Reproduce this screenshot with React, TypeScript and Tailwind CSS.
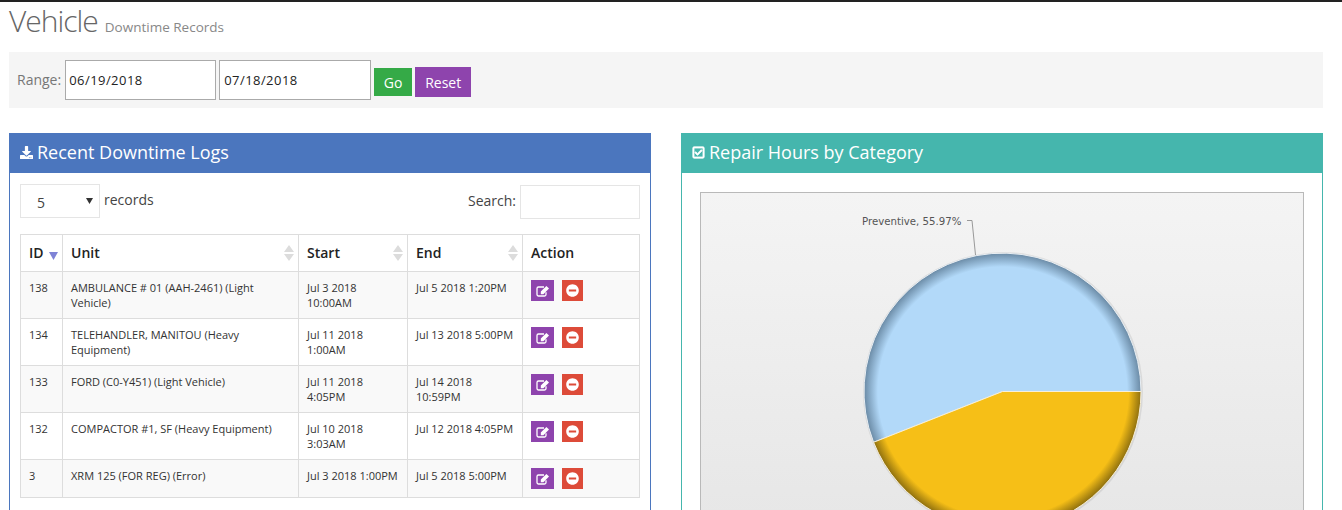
import { FaDownload, FaRegCheckSquare, FaMinusCircle } from "react-icons/fa";

const rows = [
  { id: "138", unit: "AMBULANCE # 01 (AAH-2461) (Light Vehicle)", start: "Jul 3 2018 10:00AM", end: "Jul 5 2018 1:20PM" },
  { id: "134", unit: "TELEHANDLER, MANITOU (Heavy Equipment)", start: "Jul 11 2018 1:00AM", end: "Jul 13 2018 5:00PM" },
  { id: "133", unit: "FORD (C0-Y451) (Light Vehicle)", start: "Jul 11 2018 4:05PM", end: "Jul 14 2018 10:59PM" },
  { id: "132", unit: "COMPACTOR #1, SF (Heavy Equipment)", start: "Jul 10 2018 3:03AM", end: "Jul 12 2018 4:05PM" },
  { id: "3", unit: "XRM 125 (FOR REG) (Error)", start: "Jul 3 2018 1:00PM", end: "Jul 5 2018 5:00PM" },
];

function SortIcon() {
  return (
    <svg width="10" height="16" viewBox="0 0 10 16" className="shrink-0 mt-[2px]">
      <path d="M5 0 L10 7 H0 Z M0 9 H10 L5 16 Z" fill="#dcdcdc" />
    </svg>
  );
}

function EditIcon() {
  return (
    <svg width="14" height="12" viewBox="0 0 14 12">
      <path d="M10 7.2v2.3a1.5 1.5 0 0 1-1.5 1.5h-6A1.5 1.5 0 0 1 1 9.5v-6A1.5 1.5 0 0 1 2.5 2H8" fill="none" stroke="#fff" strokeWidth="1.3" />
      <path d="M4.8 6.6 L10.4 1 L13 3.6 L7.4 9.2 H4.8 Z" fill="#fff" />
    </svg>
  );
}

function Th({ label, width, sort = true }: { label: string; width: string; sort?: boolean }) {
  return (
    <th className={`${width} border border-[#ddd] pl-[8px] pr-[4px] h-[37px] text-left align-middle text-[14px] font-semibold text-[#222]`}>
      <div className="flex items-center justify-between pb-[2px]">
        <span>{label}</span>
        {sort && <SortIcon />}
      </div>
    </th>
  );
}

export default function App() {
  return (
    <div className="h-[510px] overflow-hidden bg-white font-['Open_Sans',sans-serif] border-t-2 border-[#222] pl-[9px] pr-[19px]">
      <div className="flex items-baseline h-[50px] -mt-[1px]">
        <span className="text-[30px] tracking-[-1px] font-light leading-[40px] text-[#666]">Vehicle</span>
        <span className="ml-[7px] text-[13.5px] text-[#888]">Downtime Records</span>
      </div>

      <div className="flex items-center h-[56px] mt-[1px] bg-[#f5f5f5] pl-[8px]">
        <span className="-mt-[2px] text-[14px] text-[#777]">Range:</span>
        <input readOnly value="06/19/2018" className="ml-[4px] w-[151px] h-[40px] border border-[#aaa] bg-white px-[3px] text-[13px] tracking-[0.45px] text-[#222] outline-none" />
        <input readOnly value="07/18/2018" className="ml-[3px] w-[152px] h-[40px] border border-[#aaa] bg-white px-[4px] text-[13px] tracking-[0.45px] text-[#222] outline-none" />
        <button className="ml-[3px] mt-[4px] w-[38px] h-[28px] bg-[#35aa47] text-[14px] text-white">Go</button>
        <button className="ml-[3px] mt-[4px] w-[56px] h-[30px] bg-[#8e44ad] text-[14px] text-white">Reset</button>
      </div>

      <div className="grid grid-cols-2 gap-[30px] mt-[25px]">
        <section className="border border-[#4b76be] border-t-0 h-[500px]">
          <h2 className="flex items-center gap-[4px] -mx-[1px] h-[40px] bg-[#4b76be] pl-[11px] pb-[2px] text-[18px] text-white">
            <FaDownload className="text-[13px]" />
            Recent Downtime Logs
          </h2>
          <div className="px-[10px] pt-[12px]">
            <div className="flex items-center justify-between h-[34px]">
              <div className="flex items-center">
                <div className="flex items-center justify-between w-[80px] h-[34px] -mt-[2px] border border-[#e5e5e5] pl-[16px] pr-[6px] text-[14px] text-[#444]">
                  <span className="mt-[2px]">5</span>
                  <svg width="7" height="6" viewBox="0 0 7 6" className="-mt-[1px]">
                    <path d="M0 0 H7 L3.5 6 Z" fill="#333" />
                  </svg>
                </div>
                <span className="ml-[4px] -mt-[6px] text-[14px] text-[#444]">records</span>
              </div>
              <div className="flex items-center">
                <span className="-mt-[4px] -ml-[1px] text-[14px] text-[#444]">Search:</span>
                <input readOnly className="ml-[4px] w-[120px] h-[34px] border border-[#e5e5e5] bg-white outline-none" />
              </div>
            </div>
            <table className="mt-[15px] w-[619px] table-fixed border-collapse border border-[#ddd]">
              <thead>
                <tr>
                  <th className="w-[42px] border border-[#ddd] pl-[8px] pr-[4px] h-[37px] text-left align-middle text-[14px] font-semibold text-[#222]">
                    <div className="flex items-center justify-between pb-[2px]">
                      <span>ID</span>
                      <svg width="9" height="8" viewBox="0 0 9 8" className="mt-[7px] shrink-0">
                        <path d="M0 0 H9 L4.5 8 Z" fill="#7f83d6" />
                      </svg>
                    </div>
                  </th>
                  <Th label="Unit" width="w-[236px]" />
                  <Th label="Start" width="w-[109px]" />
                  <Th label="End" width="w-[115px]" />
                  <Th label="Action" width="w-[117px]" sort={false} />
                </tr>
              </thead>
              <tbody className="text-[11px] leading-[15px] text-[#333]">
                {rows.map((r, i) => (
                  <tr key={r.id} className={`${i === 4 ? "h-[38px]" : "h-[47px]"} ${i % 2 === 0 ? "bg-[#f9f9f9]" : "bg-white"}`}>
                    <td className="border border-[#ddd] px-[8px] pt-[8px] pb-[8px] align-top">{r.id}</td>
                    <td className="border border-[#ddd] px-[8px] pt-[8px] pb-[8px] align-top">{r.unit}</td>
                    <td className="border border-[#ddd] px-[8px] pt-[8px] pb-[8px] align-top">{r.start}</td>
                    <td className="border border-[#ddd] px-[8px] pt-[8px] pb-[8px] align-top">{r.end}</td>
                    <td className="border border-[#ddd] px-[8px] pt-[8px] pb-[8px] align-top">
                      <div className="flex gap-[8px]">
                        <span className="flex items-center justify-center w-[23px] h-[21px] bg-[#8e44ad]">
                          <EditIcon />
                        </span>
                        <span className="flex items-center justify-center w-[21px] h-[21px] bg-[#dd4b39] text-white text-[13px]">
                          <FaMinusCircle />
                        </span>
                      </div>
                    </td>
                  </tr>
                ))}
              </tbody>
            </table>
          </div>
        </section>

        <section className="border border-[#45b6ad] border-t-0 h-[500px]">
          <h2 className="flex items-center gap-[4px] -mx-[1px] h-[40px] bg-[#45b6ad] pl-[11px] pb-[2px] text-[18px] text-white">
            <FaRegCheckSquare className="text-[13px]" stroke="currentColor" strokeWidth={30} />
            Repair Hours by Category
          </h2>
          <div className="px-[18px] pt-[19px]">
            <div className="h-[500px] border border-[#b9b9b9] bg-gradient-to-b from-[#f4f4f4] to-[#e0e0e0]">
              <svg width="602" height="400" viewBox="701 193 602 400" className="block">
                <defs>
                  <radialGradient id="blue" gradientUnits="userSpaceOnUse" cx="1002.5" cy="391.5" r="138.5">
                    <stop offset="0.9" stopColor="#b2d9f9" />
                    <stop offset="1" stopColor="#6a8aa5" />
                  </radialGradient>
                  <radialGradient id="yellow" gradientUnits="userSpaceOnUse" cx="1002.5" cy="391.5" r="138.5">
                    <stop offset="0.91" stopColor="#f6bf17" />
                    <stop offset="1" stopColor="#8f700f" />
                  </radialGradient>
                </defs>
                <circle cx="1003" cy="392" r="140" fill="#000" opacity="0.08" />
                <path d="M1002.5 391.5 L1141 391.5 A138.5 138.5 0 1 0 873.6 442.3 Z" fill="url(#blue)" stroke="#e8eef3" strokeWidth="1" />
                <path d="M1002.5 391.5 L873.6 442.3 A138.5 138.5 0 0 0 1141 391.5 Z" fill="url(#yellow)" stroke="#f7efd8" strokeWidth="1" />
                <path d="M967 220.5 H972 L975.5 255" fill="none" stroke="#999" strokeWidth="1" />
                <text x="862" y="225" fontFamily="'DejaVu Sans', sans-serif" fontSize="10.2" fill="#555">Preventive, 55.97%</text>
              </svg>
            </div>
          </div>
        </section>
      </div>
    </div>
  );
}
